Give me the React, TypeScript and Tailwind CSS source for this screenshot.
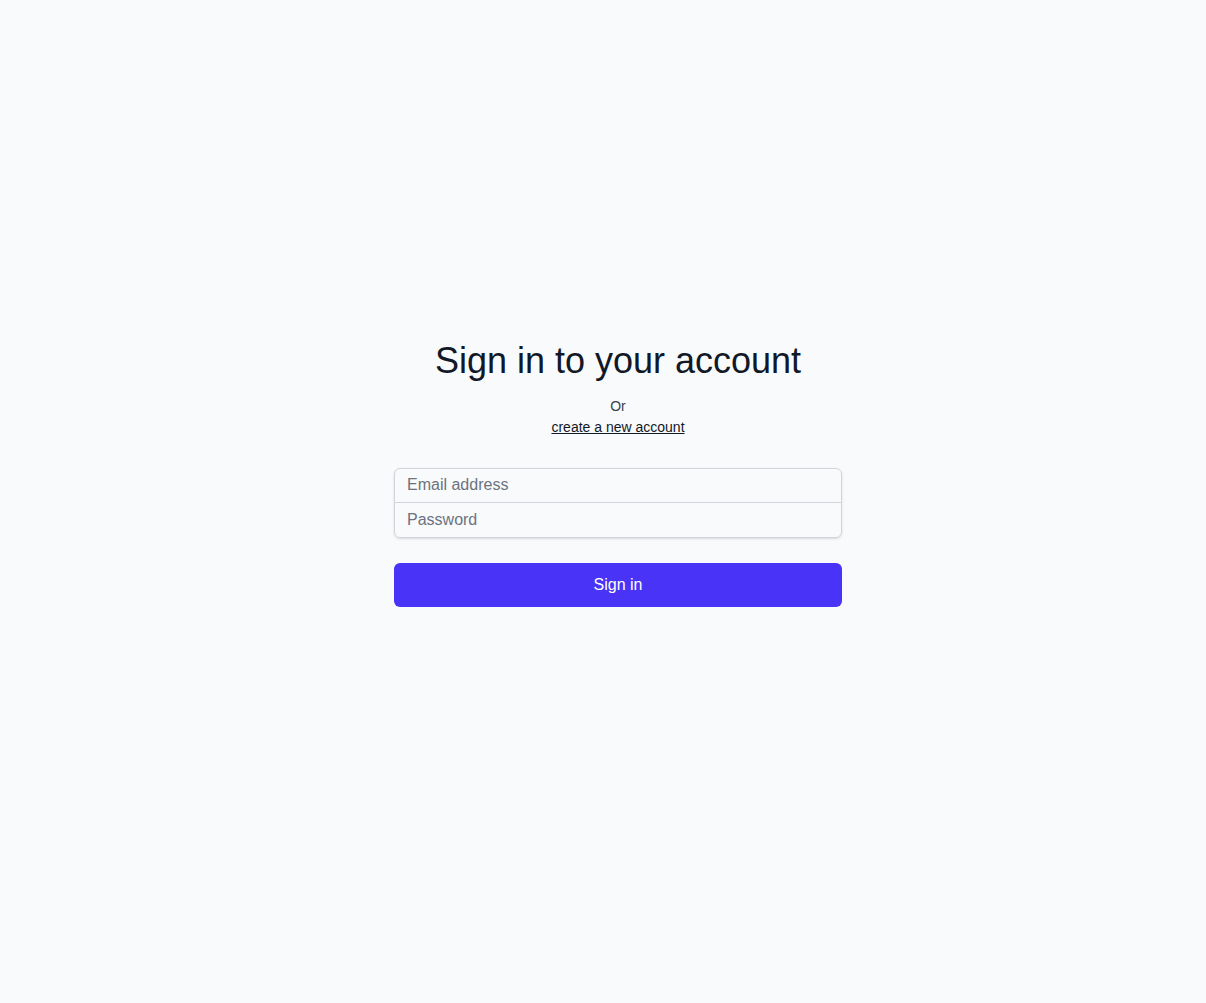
export default function App() {
  return (
    <div className="flex min-h-screen items-center justify-center bg-[#f9fafb] pb-[56px] pl-[46px] pr-4 font-['Liberation_Sans',Arial,sans-serif]">
      <div className="w-full max-w-md">
        <div className="text-center">
          <h1 className="text-4xl leading-10 text-[#111827]">Sign in to your account</h1>
          <p className="mt-[15px] text-sm leading-5 text-[#374151]">Or</p>
          <a href="#" className="mt-px block text-sm leading-5 text-[#111827] underline">
            create a new account
          </a>
        </div>

        <form className="mt-[31px]" onSubmit={(e) => e.preventDefault()}>
          <div className="rounded-md shadow-sm">
            <input
              type="email"
              placeholder="Email address"
              className="block h-[35px] w-full rounded-t-md border border-[#d1d5db] bg-[#f9fafb] px-3 text-base text-[#111827] placeholder-[#6b7280] outline-none"
            />
            <input
              type="password"
              placeholder="Password"
              className="-mt-px block h-[36px] w-full rounded-b-md border border-[#d1d5db] bg-[#f9fafb] px-3 text-base text-[#111827] placeholder-[#6b7280] outline-none"
            />
          </div>

          <button
            type="submit"
            className="mt-[25px] flex h-11 w-full items-center justify-center rounded-md bg-[#4933f6] text-base text-white"
          >
            Sign in
          </button>
        </form>
      </div>
    </div>
  );
}
